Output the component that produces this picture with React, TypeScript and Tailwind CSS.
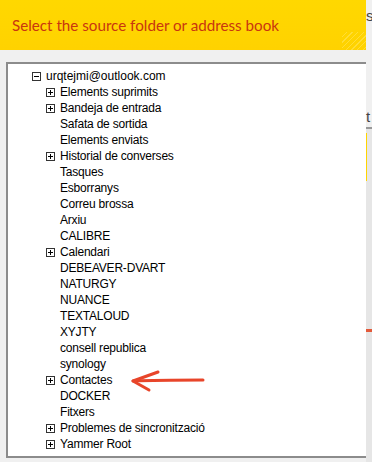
import React from 'react';

type Node = { label: string; expandable?: boolean };

const children: Node[] = [
    { label: 'Elements suprimits', expandable: true },
    { label: 'Bandeja de entrada', expandable: true },
    { label: 'Safata de sortida' },
    { label: 'Elements enviats' },
    { label: 'Historial de converses', expandable: true },
    { label: 'Tasques' },
    { label: 'Esborranys' },
    { label: 'Correu brossa' },
    { label: 'Arxiu' },
    { label: 'CALIBRE' },
    { label: 'Calendari', expandable: true },
    { label: 'DEBEAVER-DVART' },
    { label: 'NATURGY' },
    { label: 'NUANCE' },
    { label: 'TEXTALOUD' },
    { label: 'XYJTY' },
    { label: 'consell republica' },
    { label: 'synology' },
    { label: 'Contactes', expandable: true },
    { label: 'DOCKER' },
    { label: 'Fitxers' },
    { label: 'Problemes de sincronització', expandable: true },
    { label: 'Yammer Root', expandable: true },
];

const Expander = ({ open }: { open?: boolean }) => (
    <svg width="9" height="9" viewBox="0 0 9 9" className="shrink-0">
        <rect x="0.5" y="0.5" width="8" height="8" fill="white" stroke="#333" />
        <line x1="2" y1="4.5" x2="7" y2="4.5" stroke="#000" />
        {!open && <line x1="4.5" y1="2" x2="4.5" y2="7" stroke="#000" />}
    </svg>
);

const Row = ({ node, indent }: { node: Node; indent: number }) => (
    <div className="flex items-center h-4" style={{ paddingLeft: indent }}>
        <div className="w-[14px] flex items-center">{node.expandable && <Expander />}</div>
        <span className="text-[12px] leading-4 text-black whitespace-nowrap tracking-[-0.2px]">{node.label}</span>
    </div>
);

const App: React.FC = () => {
    return (
        <div className="w-[372px] h-[462px] bg-[#f0f0f0] flex overflow-hidden" style={{ fontFamily: '"Liberation Sans", Arial, sans-serif' }}>
            <div className="w-[366px] flex flex-col">
                <div className="h-[50px] bg-gradient-to-b from-[#ffd800] to-[#ffd200] flex items-center px-3 relative overflow-hidden">
                    <h1 className="text-[15.2px] text-[#c9360f] whitespace-nowrap" style={{ fontFamily: 'Lato, "Noto Sans", sans-serif' }}>
                        Select the source folder or address book
                    </h1>
                    <div className="absolute right-0 bottom-0 w-[24px] h-[18px] bg-[repeating-linear-gradient(135deg,transparent_0_3px,#ffe24d_3px_4px)] opacity-70"></div>
                </div>
                <div className="pt-3 pl-[6px] pb-1 flex-1 flex">
                    <div className="flex-1 bg-white border-2 border-r-0 border-[#8c8c8c] pt-[4px] relative">
                        <div className="flex items-center h-4 pl-[24px]">
                            <div className="w-[14px] flex items-center"><Expander open /></div>
                            <span className="text-[12px] leading-4 text-black">urqtejmi@outlook.com</span>
                        </div>
                        {children.map((n) => (
                            <Row key={n.label} node={n} indent={38} />
                        ))}
                        <svg className="absolute left-[117px] top-[304px]" width="90" height="26" viewBox="0 0 90 26">
                            <path d="M8 13 C30 12 55 12 78 12" stroke="#e8452a" strokeWidth="3" fill="none" strokeLinecap="round" />
                            <path d="M33 4 L8 13 L24 22" stroke="#e8452a" strokeWidth="3" fill="none" strokeLinecap="round" strokeLinejoin="round" />
                        </svg>
                    </div>
                </div>
            </div>
            <div className="w-[6px] relative bg-[#f0f0f0]">
                <span className="absolute left-0 top-[6px] text-[15px] text-[#444] leading-5">s</span>
                <span className="absolute left-0 top-[107px] text-[15px] text-[#444] leading-5">t</span>
                <div className="absolute left-0 right-0 top-[127px] h-[2px] bg-[#999]"></div>
                <div className="absolute left-0 right-0 top-[129px] bottom-0 bg-[#e6e6e6]"></div>
                <div className="absolute left-0 w-[1px] top-[133px] h-[48px] bg-[#ffd400]"></div>
                <div className="absolute left-0 right-0 top-[329px] h-[3px] bg-[#e35a3a]"></div>
            </div>
        </div>
    );
};

export default App;
